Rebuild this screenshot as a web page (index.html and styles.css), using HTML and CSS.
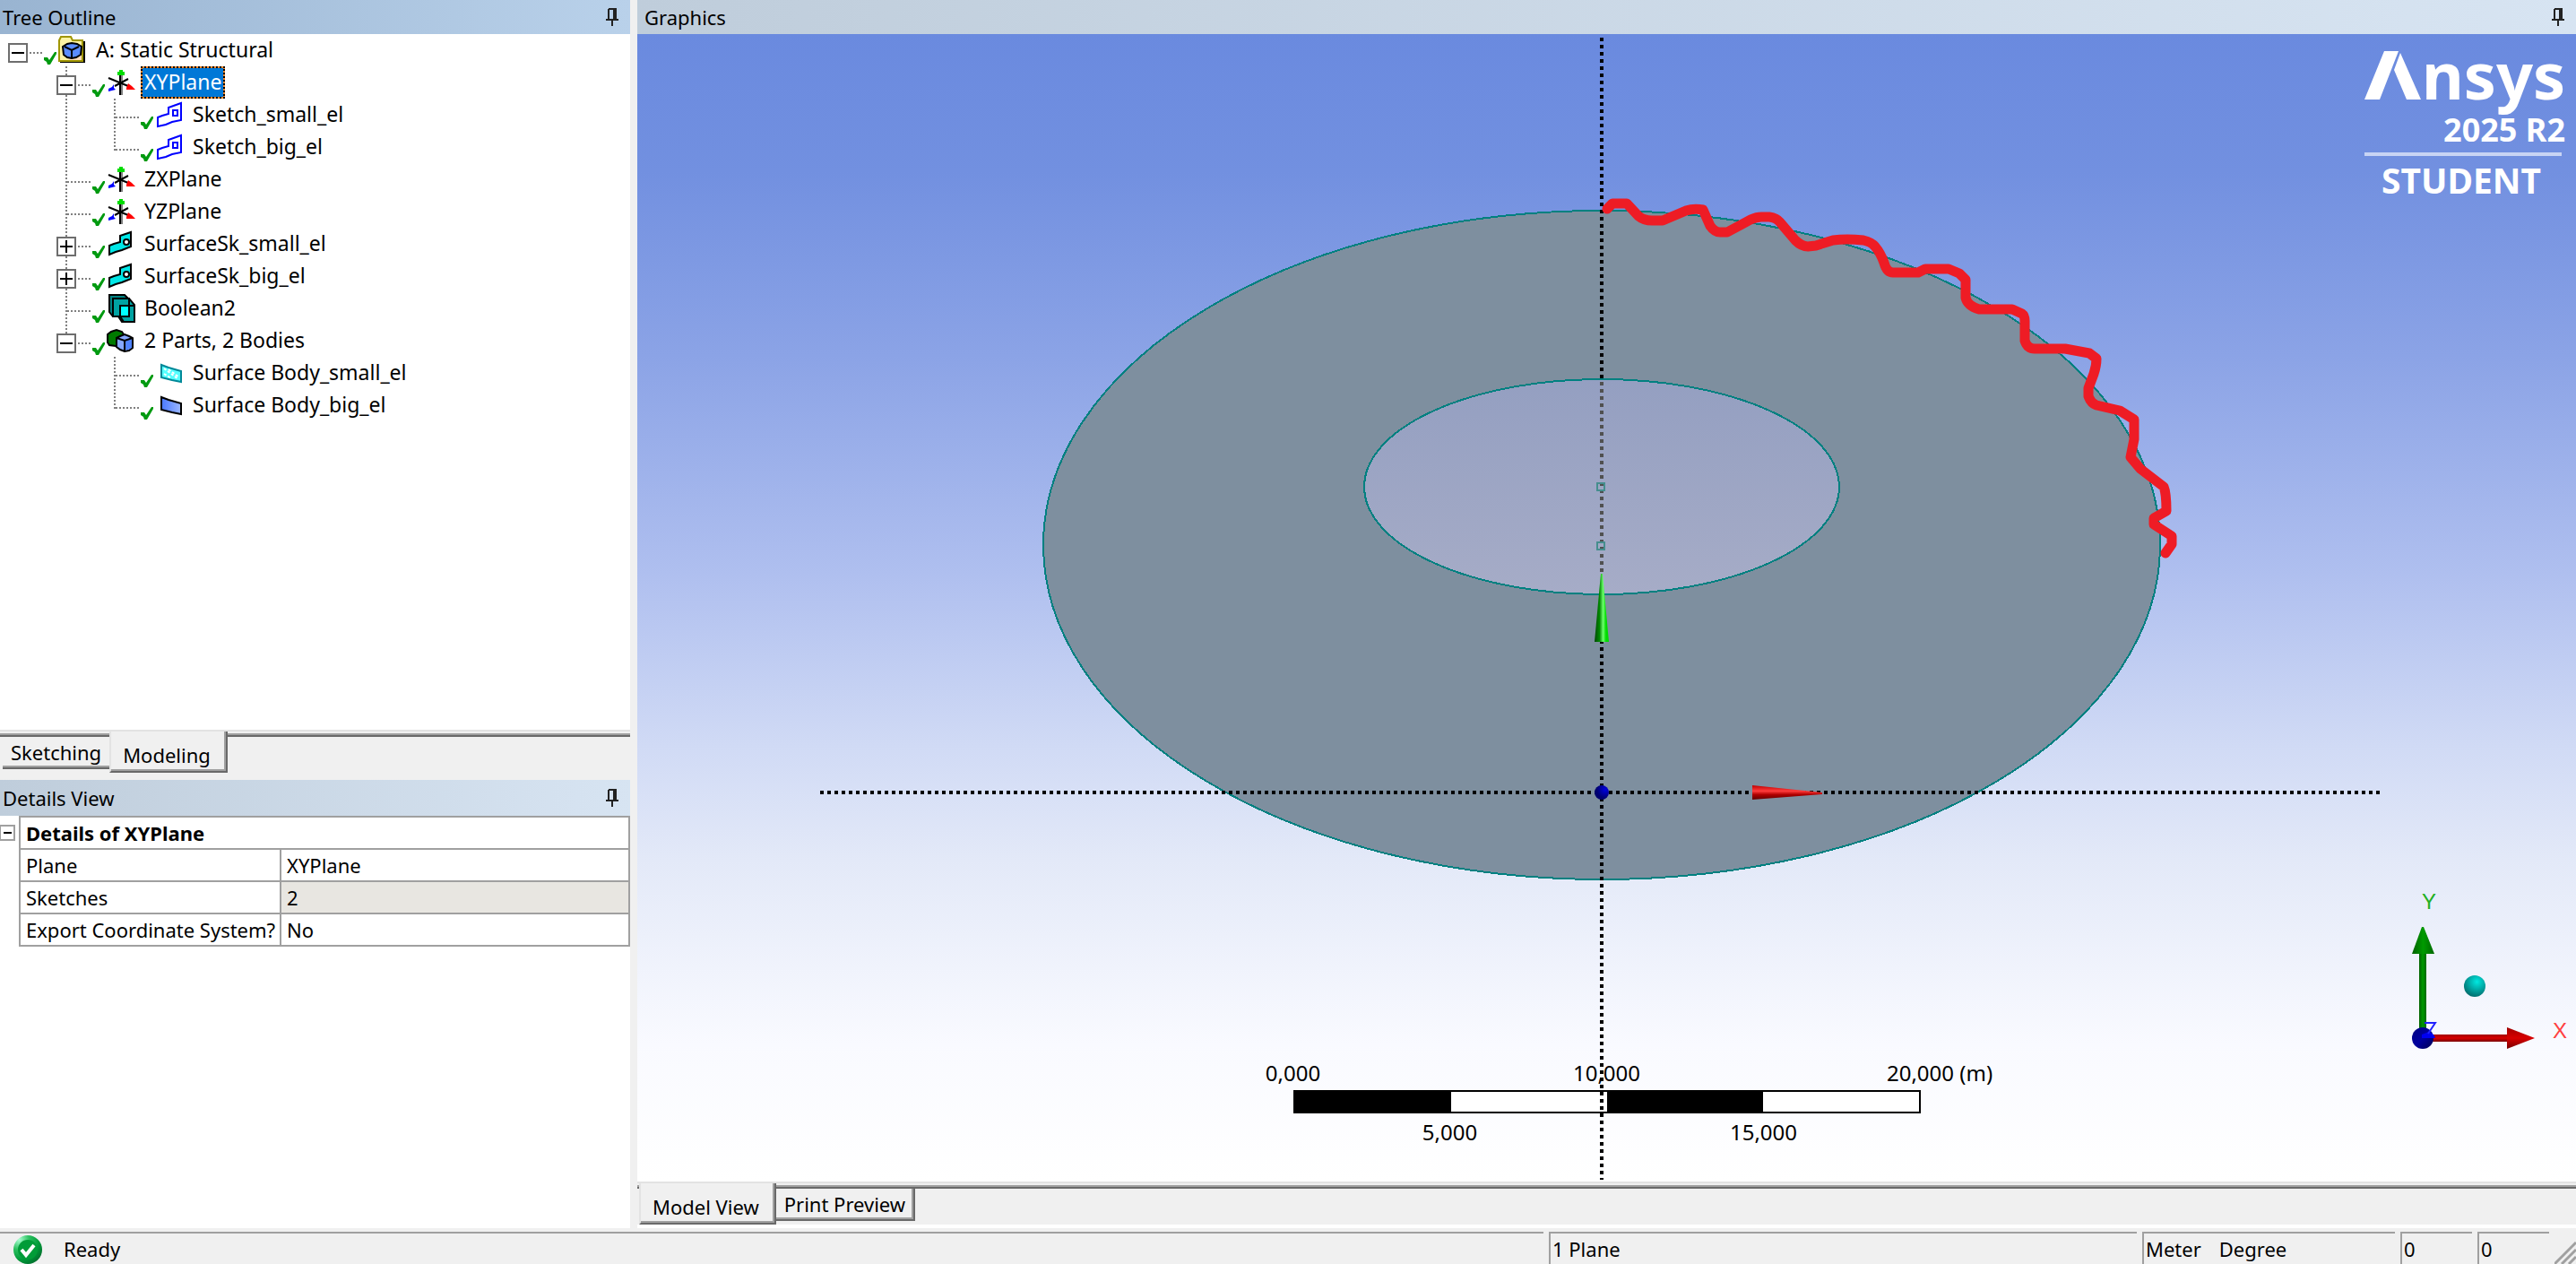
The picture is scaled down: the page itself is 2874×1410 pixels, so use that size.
FILE: index.html
```html
<!DOCTYPE html>
<html lang="en">
<head>
<meta charset="utf-8">
<title>A: Static Structural - DesignModeler</title>
<link rel="stylesheet" href="styles.css">
</head>
<body>
<svg class="defs" aria-hidden="true">
  <defs>
    <symbol id="check" viewBox="0 0 16 36"><path d="M0 26h4l2 3 6-9h2v2l-7 12H4l-1-3-3-2z" fill="#009a10"/></symbol>
    <symbol id="plane" viewBox="0 0 32 36">
      <path d="M16 10h2v22h-2z" fill="#808080"/><path d="M14 10h2v22h-2z"/>
      <path d="M2 13l22 9M24 14L9 22" stroke="#000" stroke-width="2" fill="none"/>
      <path d="M14 4h4v2h2v4h-8V6h2z" fill="#00dc00"/>
      <path d="M24 19l4 3 4 4H22v-2z" fill="#f00"/><path d="M8 20v4l2 2-4 1-4 1v-3l4-2z" fill="#00f"/>
    </symbol>
    <symbol id="sketch" viewBox="0 0 32 36">
      <path d="M3 31V21l5-2 7-2v-7l14-5v19l-10 2-7 3zM20 13h5v6h-5z" fill="none" stroke="#00f" stroke-width="2"/>
    </symbol>
    <symbol id="surface" viewBox="0 0 32 36">
      <path d="M3 30V20l5-2 7-2V9l12-4v16l-10 4-7 2z" fill="#00e6e6" stroke="#000" stroke-width="2"/>
      <circle cx="22" cy="16" r="3" fill="#fff" stroke="#000" stroke-width="2"/>
    </symbol>
    <symbol id="boolean" viewBox="0 0 32 36">
      <path d="M3 3h17l5 5v17l-5 2H7l-4-5z" fill="#008484" stroke="#000" stroke-width="2"/>
      <path d="M7 7h18l6 7v19H17l-4-6H7z" fill="#00a2a2" stroke="#000" stroke-width="2"/>
      <path d="M15 15h16v18H19l-4-6zM7 7v20h18V7z" fill="none" stroke="#000" stroke-width="2"/>
      <path d="M15 15h10v12H15z" fill="#0ff" stroke="#000" stroke-width="2"/>
    </symbol>
    <symbol id="parts" viewBox="0 0 32 36">
      <path d="M1 11l4-3 6-2 6 2 2 3v10l-9 3-7-1-2-3z" fill="#007a00" stroke="#000" stroke-width="2"/>
      <path d="M11 15l4-2 5-2 5 2 4 2v11l-4 3-5 1-5-2-4-3z" fill="#86a8ff" stroke="#000" stroke-width="2"/>
      <path d="M20 18l8-3v11l-8 3z" fill="#4f82ff"/>
      <path d="M11 15l9 3 9-3M20 18v12" fill="none" stroke="#000" stroke-width="2"/>
    </symbol>
    <symbol id="model" viewBox="0 0 32 36">
      <path d="M2 8h28v24H2z"/>
      <path d="M1 7l2-4h11l2 4h11v23H1z" fill="#fdf3a4" stroke="#a09600" stroke-width="2"/>
      <path d="M14 22h12v7H12z" fill="#ffdcb8"/>
      <path d="M5 14l5-3 5-1 6 1 5 3-1 9-5 3-5 1-5-1-4-3z" fill="#5a8cff" stroke="#000" stroke-width="2"/>
      <path d="M7 14l8 4 8-4M15 18v8" fill="none" stroke="#000" stroke-width="2"/>
    </symbol>
    <symbol id="body-small" viewBox="0 0 32 36">
      <path d="M7 9l8 3 14 4v12l-10-2-12-3z" fill="#5ff" stroke="#008898" stroke-width="2"/>
      <path d="M10 13l16 12M10 19l8 5M15 14l12 9" stroke="#fff" stroke-width="2" stroke-dasharray="3 2"/>
    </symbol>
    <symbol id="body-big" viewBox="0 0 32 36">
      <path d="M7 9l8 3 14 4v12l-10-2-12-3z" fill="url(#blueSheet)" stroke="#000" stroke-width="2"/>
    </symbol>
    <symbol id="pin" viewBox="0 0 16 20">
      <path d="M4 1h8v12M4 1v12" fill="none" stroke="#222" stroke-width="2"/>
      <path d="M9 1h3v12H9zM1 12h14v2H1zM7 14h2v6H7z" fill="#222"/>
    </symbol>
    <linearGradient id="blueSheet"><stop stop-color="#4878ff"/><stop offset="1" stop-color="#9db8ff"/></linearGradient>
  </defs>
</svg>

<main class="workspace">
  <div class="sidebar">
    <section class="outline">
      <header class="titlebar titlebar-active"><h2>Tree Outline</h2><button class="pin" aria-label="Pin Tree Outline"><svg><use href="#pin"/></svg></button></header>
      <ul class="tree">
        <li>
          <div class="row"><button class="toggle minus" aria-label="Collapse"></button><i class="stub"></i><svg class="check"><use href="#check"/></svg><svg class="icon"><use href="#model"/></svg><span class="label">A: Static Structural</span></div>
          <ul class="branch">
            <li>
              <div class="row"><button class="toggle minus" aria-label="Collapse"></button><i class="stub"></i><svg class="check"><use href="#check"/></svg><svg class="icon"><use href="#plane"/></svg><span class="label selected">XYPlane</span></div>
              <ul class="branch">
                <li><div class="row"><i class="stub leaf"></i><svg class="check"><use href="#check"/></svg><svg class="icon"><use href="#sketch"/></svg><span class="label">Sketch_small_el</span></div></li>
                <li><div class="row"><i class="stub leaf"></i><svg class="check"><use href="#check"/></svg><svg class="icon"><use href="#sketch"/></svg><span class="label">Sketch_big_el</span></div></li>
              </ul>
            </li>
            <li><div class="row"><i class="stub leaf"></i><svg class="check"><use href="#check"/></svg><svg class="icon"><use href="#plane"/></svg><span class="label">ZXPlane</span></div></li>
            <li><div class="row"><i class="stub leaf"></i><svg class="check"><use href="#check"/></svg><svg class="icon"><use href="#plane"/></svg><span class="label">YZPlane</span></div></li>
            <li><div class="row"><button class="toggle plus" aria-label="Expand"></button><i class="stub"></i><svg class="check"><use href="#check"/></svg><svg class="icon"><use href="#surface"/></svg><span class="label">SurfaceSk_small_el</span></div></li>
            <li><div class="row"><button class="toggle plus" aria-label="Expand"></button><i class="stub"></i><svg class="check"><use href="#check"/></svg><svg class="icon"><use href="#surface"/></svg><span class="label">SurfaceSk_big_el</span></div></li>
            <li><div class="row"><i class="stub leaf"></i><svg class="check"><use href="#check"/></svg><svg class="icon"><use href="#boolean"/></svg><span class="label">Boolean2</span></div></li>
            <li>
              <div class="row"><button class="toggle minus" aria-label="Collapse"></button><i class="stub"></i><svg class="check"><use href="#check"/></svg><svg class="icon"><use href="#parts"/></svg><span class="label">2 Parts, 2 Bodies</span></div>
              <ul class="branch">
                <li><div class="row"><i class="stub leaf"></i><svg class="check"><use href="#check"/></svg><svg class="icon"><use href="#body-small"/></svg><span class="label">Surface Body_small_el</span></div></li>
                <li><div class="row"><i class="stub leaf"></i><svg class="check"><use href="#check"/></svg><svg class="icon"><use href="#body-big"/></svg><span class="label">Surface Body_big_el</span></div></li>
              </ul>
            </li>
          </ul>
        </li>
      </ul>
      <nav class="tabs tabs-left"><button class="tab">Sketching</button><button class="tab tab-on">Modeling</button></nav>
    </section>
    <section class="details">
      <header class="titlebar"><h2>Details View</h2><button class="pin" aria-label="Pin Details View"><svg><use href="#pin"/></svg></button></header>
      <div class="details-body">
        <div class="gutter"><button class="toggle toggle-small minus" aria-label="Collapse"></button></div>
        <table class="props">
          <colgroup><col class="col-name"><col></colgroup>
          <thead><tr><th colspan="2">Details of XYPlane</th></tr></thead>
          <tbody>
            <tr><td>Plane</td><td>XYPlane</td></tr>
            <tr><td>Sketches</td><td class="readonly">2</td></tr>
            <tr><td>Export Coordinate System?</td><td>No</td></tr>
          </tbody>
        </table>
      </div>
    </section>
  </div>

  <section class="graphics">
    <header class="titlebar"><h2>Graphics</h2><button class="pin" aria-label="Pin Graphics"><svg><use href="#pin"/></svg></button></header>
    <div class="stage">
      <div class="scale">
        <div class="ticks"><span>0,000</span><span>10,000</span><span>20,000<span class="unit"> (m)</span></span></div>
        <div class="bar"><i class="dark"></i><i></i><i class="dark"></i><i></i></div>
        <div class="ticks ticks-low"><span>5,000</span><span>15,000</span></div>
      </div>
      <svg class="scene" viewBox="711 38 2163 1280" role="img" aria-label="Elliptical surface body with a smaller elliptical surface">
        <defs>
          <linearGradient id="inner" x2="0" y2="1"><stop stop-color="#949fc1"/><stop offset="1" stop-color="#a6acc7"/></linearGradient>
          <linearGradient id="greenCone"><stop stop-color="#004800"/><stop offset=".35" stop-color="#008a00"/><stop offset=".6" stop-color="#6cff6c"/><stop offset=".8" stop-color="#00dc00"/></linearGradient>
          <linearGradient id="redCone" x2="0" y2="1"><stop stop-color="#c00000"/><stop offset=".4" stop-color="#ff3c3c"/><stop offset=".65" stop-color="#b00000"/><stop offset="1" stop-color="#600000"/></linearGradient>
          <radialGradient id="origin" cx=".75" cy=".3" r=".6"><stop stop-color="#0000e0"/><stop offset="1" stop-color="#000070"/></radialGradient>
        </defs>
        <g shape-rendering="crispEdges">
          <ellipse cx="1787" cy="608" rx="623" ry="373" fill="#7e8f9f" stroke="#008080" stroke-width="2"/>
          <path d="M915 884H2657M1787 42V1316" stroke="#000" stroke-width="4" stroke-dasharray="4 4" fill="none"/>
          <ellipse cx="1787" cy="543" rx="265" ry="120" fill="url(#inner)" stroke="#008080" stroke-width="2"/>
          <path d="M1787 426V642" stroke="#505050" stroke-width="4" stroke-dasharray="4 4" fill="none"/>
          <path d="M1782 539h8v8h-8zM1782 605h8v8h-8z" stroke="#458e8e" stroke-width="2" fill="none"/>
        </g>
        <path d="M1786 640h2l7 76h-16z" fill="url(#greenCone)"/>
        <path d="M1955 876l78 8v2l-78 6z" fill="url(#redCone)"/>
        <circle cx="1787" cy="884" r="8" fill="url(#origin)"/>
        <path transform="translate(1780 200)" fill="none" stroke="#ee1c25" stroke-width="11" stroke-linejoin="round" stroke-linecap="round" d="M13 33L19 27H35L48 41Q54 46 63 46H75L101 35Q110 32 120 34L128 52Q133 59 139 59H147L173 45Q180 42 185 42H194Q202 43 206 48L223 68Q230 75 237 75L246 74 265 68Q280 66 299 68Q308 70 312 75Q318 82 322 93Q325 104 332 104H360L368 100H394L406 105 413 112V132Q415 141 428 145H465L476 150Q479 152 479 158V180Q482 189 490 189H524L551 194 559 200Q559 208 556 217L550 233V242Q553 250 559 252L585 258 601 268V290L597 310 608 323 634 343Q637 350 637 370L623 378V385L643 398V407L636 417"/>
      </svg>
      <div class="brand">
        <div class="wordmark"><svg class="mark" viewBox="0 0 64 54" role="img" aria-label="A"><path d="M22 0H38L17 54H0zM40 2L63 54H47L33 21z" fill="#fff"/></svg><span>nsys</span></div>
        <div class="release">2025 R2</div>
        <div class="edition">STUDENT</div>
      </div>
      <svg class="triad" viewBox="0 0 200 200" role="img" aria-label="Axis triad">
        <defs>
          <linearGradient id="tg"><stop stop-color="#006000"/><stop offset=".5" stop-color="#009a00"/><stop offset="1" stop-color="#006800"/></linearGradient>
          <linearGradient id="tr" x2="0" y2="1"><stop stop-color="#a00000"/><stop offset=".5" stop-color="#d80000"/><stop offset="1" stop-color="#780000"/></linearGradient>
          <radialGradient id="tc" cx=".6" cy=".3" r=".7"><stop stop-color="#00e8e0"/><stop offset="1" stop-color="#007070"/></radialGradient>
          <linearGradient id="tb" y2="1"><stop stop-color="#000080"/><stop offset=".5" stop-color="#0000a0"/><stop offset="1" stop-color="#000050"/></linearGradient>
        </defs>
        <text x="28" y="34" fill="#22b022">Y</text>
        <text x="174" y="178" fill="#ff4040">X</text>
        <path d="M25 84h8v88h-8z" fill="url(#tg)"/><path d="M28 54h2l12 30H17z" fill="url(#tg)"/>
        <path d="M38 174h86v8H38z" fill="url(#tr)"/><path d="M123 166l31 12-31 12z" fill="url(#tr)"/>
        <circle cx="29" cy="178" r="12" fill="url(#tb)"/><path d="M28 174l8-3 5 3 2 4H28z" fill="#0000f0"/>
        <path d="M31 161h12l-8 12" stroke="#22f" stroke-width="2" fill="none"/>
        <circle cx="87" cy="120" r="12" fill="url(#tc)"/>
      </svg>
    </div>
    <nav class="tabs tabs-right"><button class="tab tab-on">Model View</button><button class="tab">Print Preview</button></nav>
  </section>
</main>

<footer class="status">
  <div class="cell cell-main">
    <svg class="ready" viewBox="0 0 32 32" aria-hidden="true">
      <defs><radialGradient id="ok" cx=".2" cy=".15" r="1"><stop stop-color="#a8ffd0"/><stop offset=".35" stop-color="#2cc060"/><stop offset=".7" stop-color="#009a38"/><stop offset="1" stop-color="#006a2c"/></radialGradient></defs>
      <circle cx="16" cy="16" r="16" fill="url(#ok)"/><circle cx="16" cy="16" r="11" fill="#009c38"/>
      <path d="M9 16l5 6 9-11" fill="none" stroke="#fff" stroke-width="4"/>
    </svg>
    <span>Ready</span>
  </div>
  <div class="cell cell-selection">1 Plane</div>
  <div class="cell cell-units"><span>Meter</span><span>Degree</span></div>
  <div class="cell cell-num">0</div>
  <div class="cell cell-num">0</div>
  <svg class="grip" viewBox="0 0 24 36" aria-hidden="true"><path d="M0 36L24 12M8 36L24 20M16 36L24 28" stroke="#a0a0a0" stroke-width="3"/></svg>
</footer>
</body>
</html>
```
FILE: styles.css
```css
:root {
  --face: #f0f0f0;
  --shade: #a0a0a0;
  --dark: #696969;
  --row: 36px;
}

* { box-sizing: border-box; }

body {
  margin: 0;
  min-height: 100vh;
  display: flex;
  flex-direction: column;
  background: var(--face);
  color: #000;
  font: 22px/36px "Noto Sans", "Open Sans", sans-serif;
}

button {
  margin: 0;
  padding: 0;
  border: 0;
  background: none;
  color: inherit;
  font: inherit;
}

svg { display: block; flex: none; }
.defs { position: absolute; width: 0; height: 0; }

.workspace { flex: 1; display: flex; gap: 8px; }

.titlebar {
  flex: none;
  display: flex;
  align-items: center;
  justify-content: space-between;
  height: 38px;
  padding: 0 12px 0 3px;
  background: linear-gradient(90deg, #bfcddb, #d7e4f2);
}
.titlebar-active { background: linear-gradient(90deg, #99b4d1, #b9d1ea); }
.titlebar h2 { margin: 0; font: inherit; }
.pin svg { width: 16px; height: 20px; }

/* Left column */
.sidebar { flex: none; width: 703px; display: flex; flex-direction: column; background: #fff; }
.outline { height: 870px; display: flex; flex-direction: column; }

.tree { flex: 1; margin: 0; padding: 0 0 0 9px; list-style: none; font-size: 23px; }
.branch { margin: 0; padding: 0 0 0 54px; list-style: none; }
.branch > li {
  background: repeating-linear-gradient(#808080 0 2px, transparent 2px 4px) 10px 0 / 2px 100% no-repeat;
}
.branch > li:last-child { background-size: 2px 22px; }

.row { display: flex; height: var(--row); }
.toggle {
  flex: none;
  width: 22px;
  height: 22px;
  margin-top: 10px;
  border: 2px solid #6e6e6e;
  background: linear-gradient(#000, #000) center / 14px 2px no-repeat #fff;
}
.plus {
  background:
    linear-gradient(#000, #000) center / 14px 2px no-repeat,
    linear-gradient(#000, #000) center / 2px 14px no-repeat #fff;
}
.stub {
  flex: none;
  width: 18px;
  background: repeating-linear-gradient(90deg, transparent 0 2px, #808080 2px 4px) 0 20px / 16px 2px no-repeat;
}
.leaf { width: 40px; background-position: 10px 20px; background-size: 28px 2px; }
.check { width: 16px; height: 36px; }
.icon { width: 32px; height: 36px; margin-right: 6px; }
.label { padding: 0 4px; line-height: 34px; white-space: nowrap; }
.selected {
  padding: 0 2px;
  border: 2px dotted #000;
  line-height: 30px;
  color: #fff;
  background: linear-gradient(#0078d7, #0078d7) padding-box, #ff8728 border-box;
}

/* Bottom tabs */
.tabs {
  flex: none;
  display: flex;
  align-items: flex-start;
  background: linear-gradient(#e3e3e3 0 2px, var(--face) 2px 4px, var(--shade) 4px 6px, var(--dark) 6px 8px, var(--face) 8px);
}
.tabs-left { height: 56px; padding-left: 3px; }
.tabs-right { height: 48px; padding-left: 2px; }
.tab {
  height: 36px;
  margin-top: 8px;
  padding: 0 9px;
  line-height: 34px;
  background: var(--face);
  border-bottom: 2px solid var(--dark);
  box-shadow: inset 0 -2px var(--shade);
}
.tab-on {
  height: 46px;
  margin-top: 2px;
  padding: 8px 17px 0 13px;
  border-right: 2px solid var(--dark);
  border-left: 2px solid #e3e3e3;
  box-shadow: inset -2px -2px var(--shade);
}
.tabs-right .tab:not(.tab-on) { border-right: 2px solid var(--dark); box-shadow: inset -2px -2px var(--shade); }

/* Details */
.details .titlebar { height: 40px; }
.details-body { display: flex; }
.gutter { flex: none; width: 21px; }
.toggle-small {
  display: block;
  width: 17px;
  height: 18px;
  border-color: var(--shade);
  border-left-width: 1px;
  background-size: 9px 2px;
}
.props { width: 682px; border-collapse: collapse; table-layout: fixed; }
.props th, .props td {
  height: 36px;
  padding: 0 6px;
  border: 2px solid var(--shade);
  line-height: 34px;
  text-align: left;
  white-space: nowrap;
}
.col-name { width: 291px; }
.props .readonly { background: #e8e6e1; }

/* Graphics */
.graphics { flex: 1; min-width: 0; display: flex; flex-direction: column; border-bottom: 4px solid #fff; }
.graphics .titlebar { padding-left: 8px; }
.stage {
  flex: 1;
  position: relative;
  background: linear-gradient(#6a8adf, #7290e0 12%, #8ba3e6 28%, #afbfef 47%, #d0daf5 62%, #e3e9f8 72%, #f9faff 88%, #fff);
}
.scene { position: absolute; inset: 0; width: 100%; height: 100%; }

.scale {
  position: absolute;
  left: 50%;
  bottom: 34px;
  width: 700px;
  margin-left: -350px;
  font-size: 24px;
}
.bar { display: grid; grid-template-columns: repeat(4, 1fr); height: 26px; border: 2px solid #000; background: #fff; }
.dark { background: #000; }
.ticks { display: flex; justify-content: space-between; height: 38px; line-height: 38px; }
.ticks span { width: 0; display: flex; justify-content: center; white-space: pre; }
.ticks .unit { justify-content: flex-start; }
.ticks-low { height: 42px; justify-content: space-around; line-height: 42px; }

.brand { position: absolute; top: 18px; right: 12px; width: 224px; color: #fff; font-weight: 700; }
.wordmark { display: flex; align-items: baseline; height: 70px; font-size: 72px; line-height: 54px; }
.mark { width: 64px; height: 54px; }
.release { height: 44px; font-size: 36px; line-height: 38px; text-align: right; }
.edition {
  width: 220px;
  padding-right: 4px;
  border-top: 4px solid #c8d4f4;
  font-size: 39px;
  line-height: 54px;
  text-align: center;
}

.triad { position: absolute; right: 0; bottom: 138px; width: 200px; height: 200px; font: 24px "Liberation Sans", sans-serif; }

/* Status bar */
.status { flex: none; display: flex; gap: 6px; height: 40px; padding-top: 4px; overflow: hidden; }
.cell { border-top: 2px solid var(--shade); border-left: 2px solid var(--shade); line-height: 34px; padding-left: 2px; }
.cell-main { flex: 1; display: flex; gap: 24px; padding-left: 15px; border-left: 0; }
.ready { width: 32px; height: 32px; margin-top: 2px; }
.cell-selection { width: 656px; }
.cell-units { width: 282px; display: flex; gap: 20px; }
.cell-num { width: 80px; }
.grip { width: 24px; height: 36px; }
```
